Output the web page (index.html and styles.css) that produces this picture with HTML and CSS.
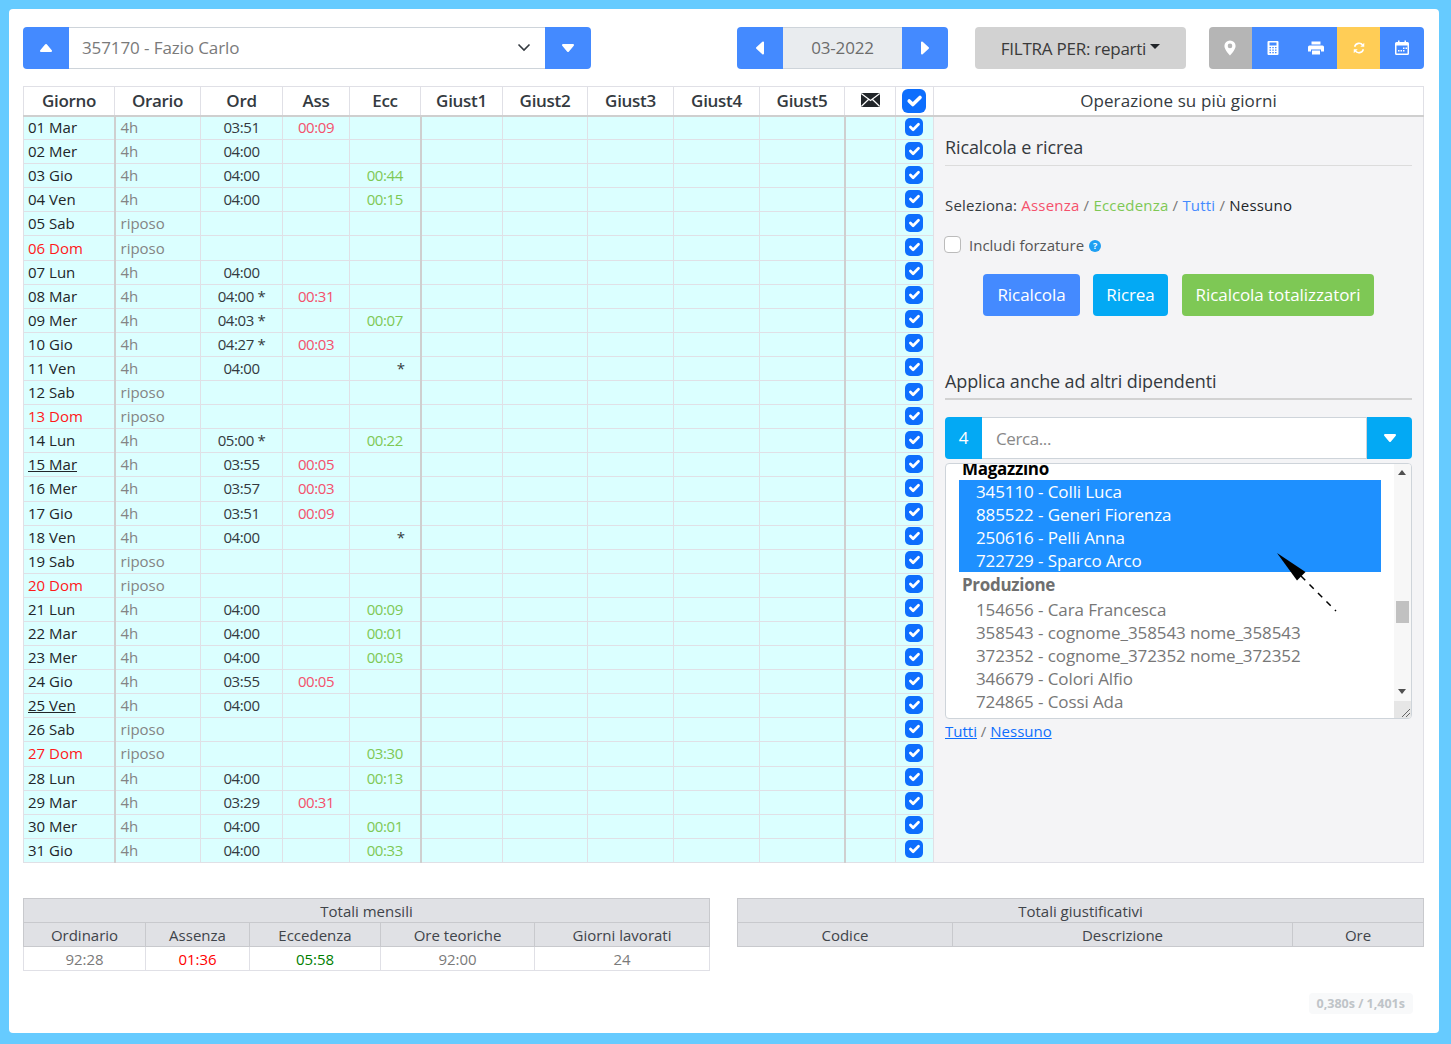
FILE: index.html
```html
<!DOCTYPE html>
<html lang="it">
<head>
    <meta charset="UTF-8">
    <title>Cartellino</title>
    <link rel="stylesheet" href="styles.css">
</head>
<body>
<div class="card">

    <!-- Barra superiore -->
    <div class="toolbar">
        <div class="group group-emp">
            <button class="btn btn-blue btn-arrow"><svg width="14" height="10" viewBox="0 0 14 10"><path d="M7 2L2 8h10z" class="tri"/></svg></button>
            <div class="select">357170 - Fazio Carlo
                <svg class="chevron" width="14" height="9" viewBox="0 0 14 9"><path d="M1.5 1.5L7 7l5.5-5.5" fill="none" stroke="#343a40" stroke-width="1.6"/></svg>
            </div>
            <button class="btn btn-blue btn-arrow"><svg width="14" height="10" viewBox="0 0 14 10"><path d="M2 2h10L7 8z" class="tri"/></svg></button>
        </div>

        <div class="group group-date">
            <button class="btn btn-blue btn-side"><svg width="10" height="14" viewBox="0 0 10 14"><path d="M8 1.5v11L2 7z" class="tri"/></svg></button>
            <div class="date">03-2022</div>
            <button class="btn btn-blue btn-side"><svg width="10" height="14" viewBox="0 0 10 14"><path d="M2 1.5v11L8 7z" class="tri"/></svg></button>
        </div>

        <button class="btn btn-filter">FILTRA PER: reparti<span class="caret"></span></button>

        <div class="group group-icons">
            <button class="btn btn-icon btn-gray"><svg width="14" height="16" viewBox="0 0 14 16"><path fill="#fff" fill-rule="evenodd" d="M7 .5A5.6 5.6 0 0 0 1.4 6c0 3.7 5.6 9.5 5.6 9.5s5.6-5.800 5.600-9.500A5.600 5.600 0 0 0 7 .5zM7 8.200A2.300 2.300 0 1 1 7 3.600a2.300 2.300 0 0 1 0 4.600z"/></svg></button>
            <button class="btn btn-icon btn-blue"><svg width="14" height="16" viewBox="0 0 14 16"><path fill="#fff" fill-rule="evenodd" d="M2.500 1h9a1 1 0 0 1 1 1v12a1 1 0 0 1-1 1h-9a1 1 0 0 1-1-1V2a1 1 0 0 1 1-1zM3.500 2.500v3h7v-3zM3.500 7v1.300h1.500V7zM6.300 7v1.300h1.500V7zM9 7v1.300h1.500V7zM3.500 9.500v1.300h1.500V9.500zM6.300 9.500v1.300h1.500V9.500zM9 9.500v1.300h1.500V9.500zM3.500 12v1.300h1.500V12zM6.300 12v1.300h1.500V12zM9 12v1.300h1.500V12z"/></svg></button>
            <button class="btn btn-icon btn-blue"><svg width="18" height="16" viewBox="0 0 18 16"><path fill="#fff" fill-rule="evenodd" d="M4.500 1.500h9v3h-9zM2.500 5.500h13a1.500 1.500 0 0 1 1.500 1.500v4.500h-3V9.500H4v2H1V7a1.500 1.500 0 0 1 1.500-1.500zM5 10.500h8v4H5z"/></svg></button>
            <button class="btn btn-icon btn-yellow"><svg width="14" height="14" viewBox="0 0 16 16"><path fill="none" stroke="#fff" stroke-width="1.800" d="M3 6.500A5.200 5.200 0 0 1 12.400 5M13 9.500A5.200 5.200 0 0 1 3.600 11"/><path fill="#fff" d="M14 2v4.500H9.500zM2 14V9.500h4.500z"/></svg></button>
            <button class="btn btn-icon btn-blue"><svg width="16" height="16" viewBox="0 0 16 16"><path fill="#fff" fill-rule="evenodd" d="M4 .5h1.500V2h5V.5H12V2h1.500A1.500 1.500 0 0 1 15 3.500v10a1.500 1.500 0 0 1-1.500 1.500h-11A1.500 1.500 0 0 1 1 13.500v-10A1.500 1.500 0 0 1 2.500 2H4zM2.500 5.500v8h11v-8zM9 7.500h1.500V9H9zM11.500 7.500H13V9h-1.500zM6.500 10H8v1.500H6.500zM4 10h1.500v1.500H4zM9 10h1.500v1.500H9z"/></svg></button>
        </div>
    </div>

    <!-- Tabella giorni -->
    <table class="days">
        <colgroup>
            <col class="c-giorno"><col class="c-orario"><col class="c-ord"><col class="c-ass"><col class="c-ecc">
            <col class="c-g1"><col class="c-g2"><col class="c-g3"><col class="c-g4"><col class="c-g5">
            <col class="c-mail"><col class="c-check"><col>
        </colgroup>
        <thead>
            <tr>
                <th>Giorno</th><th>Orario</th><th>Ord</th><th>Ass</th><th>Ecc</th>
                <th>Giust1</th><th>Giust2</th><th>Giust3</th><th>Giust4</th><th>Giust5</th>
                <th><svg class="mail" width="19" height="14" viewBox="0 0 19 14"><rect width="19" height="14" rx="1.500" fill="#212529"/><path d="M.5.800L9.500 7.500 18.500.800M.5 13.200L7.500 6.500M18.500 13.200L11.500 6.500" fill="none" stroke="#fff" stroke-width="1.200"/></svg></th>
                <th><input type="checkbox" class="check check-big" checked></th>
                <th class="side-title">Operazione su più giorni</th>
            </tr>
        </thead>
        <tbody>
            <tr><td>01 Mar</td><td class="hrs">4h</td><td>03:51</td><td class="ass">00:09</td><td></td><td></td><td></td><td></td><td></td><td></td><td></td><td><input type="checkbox" class="check" checked></td>
                <td rowspan="31" class="side">
                    <div class="panel">
                        <h5 class="panel-title">Ricalcola e ricrea</h5>
                        <p class="pick">Seleziona: <a class="ass">Assenza</a> <span class="sep">/</span> <a class="ecc">Eccedenza</a> <span class="sep">/</span> <a class="all">Tutti</a> <span class="sep">/</span> <a class="none">Nessuno</a></p>
                        <label class="force"><input type="checkbox" class="check-empty"> Includi forzature <span class="help">?</span></label>
                        <div class="actions">
                            <button class="btn btn-blue btn-act">Ricalcola</button>
                            <button class="btn btn-cyan btn-act">Ricrea</button>
                            <button class="btn btn-green btn-act">Ricalcola totalizzatori</button>
                        </div>
                        <h5 class="panel-title2">Applica anche ad altri dipendenti</h5>
                        <div class="group group-search">
                            <div class="count">4</div>
                            <div class="search">Cerca...</div>
                            <button class="btn btn-cyan btn-drop"><svg width="14" height="10" viewBox="0 0 14 10"><path d="M2 2h10L7 8z" class="tri"/></svg></button>
                        </div>
                        <div class="listbox">
                            <div class="list">
                                <div class="optgroup first">Magazzino</div>
                                <div class="opt sel">345110 - Colli Luca</div>
                                <div class="opt sel">885522 - Generi Fiorenza</div>
                                <div class="opt sel">250616 - Pelli Anna</div>
                                <div class="opt sel">722729 - Sparco Arco</div>
                                <div class="optgroup">Produzione</div>
                                <div class="opt">154656 - Cara Francesca</div>
                                <div class="opt">358543 - cognome_358543 nome_358543</div>
                                <div class="opt">372352 - cognome_372352 nome_372352</div>
                                <div class="opt">346679 - Colori Alfio</div>
                                <div class="opt">724865 - Cossi Ada</div>
                                <div class="opt">512207 - Dani Marco</div>
                            </div>
                            <div class="scrollbar">
                                <svg class="sb-up" width="8" height="5" viewBox="0 0 8 5"><path d="M4 0l4 5H0z" fill="#505050"/></svg>
                                <div class="sb-thumb"></div>
                                <svg class="sb-down" width="8" height="5" viewBox="0 0 8 5"><path d="M0 0h8L4 5z" fill="#505050"/></svg>
                                <div class="sb-grip"><svg width="12" height="12" viewBox="0 0 12 12"><path d="M3 11l8-8M7 11l4-4" stroke="#666" fill="none"/></svg></div>
                            </div>
                            <svg class="pointer" width="70" height="70" viewBox="0 0 70 70"><path d="M1 1L29.500 20 21 28.500z" fill="#000"/><path d="M25 24L60 59" stroke="#000" stroke-width="1.500" stroke-dasharray="6 6" fill="none"/></svg>
                        </div>
                        <p class="links"><a>Tutti</a> <span class="sep">/</span> <a>Nessuno</a></p>
                    </div>
                </td>
            </tr>
            <tr><td>02 Mer</td><td class="hrs">4h</td><td>04:00</td><td></td><td></td><td></td><td></td><td></td><td></td><td></td><td></td><td><input type="checkbox" class="check" checked></td></tr>
            <tr><td>03 Gio</td><td class="hrs">4h</td><td>04:00</td><td></td><td class="ecc">00:44</td><td></td><td></td><td></td><td></td><td></td><td></td><td><input type="checkbox" class="check" checked></td></tr>
            <tr><td>04 Ven</td><td class="hrs">4h</td><td>04:00</td><td></td><td class="ecc">00:15</td><td></td><td></td><td></td><td></td><td></td><td></td><td><input type="checkbox" class="check" checked></td></tr>
            <tr><td>05 Sab</td><td class="hrs">riposo</td><td></td><td></td><td></td><td></td><td></td><td></td><td></td><td></td><td></td><td><input type="checkbox" class="check" checked></td></tr>
            <tr><td class="sun">06 Dom</td><td class="hrs">riposo</td><td></td><td></td><td></td><td></td><td></td><td></td><td></td><td></td><td></td><td><input type="checkbox" class="check" checked></td></tr>
            <tr><td>07 Lun</td><td class="hrs">4h</td><td>04:00</td><td></td><td></td><td></td><td></td><td></td><td></td><td></td><td></td><td><input type="checkbox" class="check" checked></td></tr>
            <tr><td>08 Mar</td><td class="hrs">4h</td><td>04:00 *</td><td class="ass">00:31</td><td></td><td></td><td></td><td></td><td></td><td></td><td></td><td><input type="checkbox" class="check" checked></td></tr>
            <tr><td>09 Mer</td><td class="hrs">4h</td><td>04:03 *</td><td></td><td class="ecc">00:07</td><td></td><td></td><td></td><td></td><td></td><td></td><td><input type="checkbox" class="check" checked></td></tr>
            <tr><td>10 Gio</td><td class="hrs">4h</td><td>04:27 *</td><td class="ass">00:03</td><td></td><td></td><td></td><td></td><td></td><td></td><td></td><td><input type="checkbox" class="check" checked></td></tr>
            <tr><td>11 Ven</td><td class="hrs">4h</td><td>04:00</td><td></td><td class="star">*</td><td></td><td></td><td></td><td></td><td></td><td></td><td><input type="checkbox" class="check" checked></td></tr>
            <tr><td>12 Sab</td><td class="hrs">riposo</td><td></td><td></td><td></td><td></td><td></td><td></td><td></td><td></td><td></td><td><input type="checkbox" class="check" checked></td></tr>
            <tr><td class="sun">13 Dom</td><td class="hrs">riposo</td><td></td><td></td><td></td><td></td><td></td><td></td><td></td><td></td><td></td><td><input type="checkbox" class="check" checked></td></tr>
            <tr><td>14 Lun</td><td class="hrs">4h</td><td>05:00 *</td><td></td><td class="ecc">00:22</td><td></td><td></td><td></td><td></td><td></td><td></td><td><input type="checkbox" class="check" checked></td></tr>
            <tr><td class="under">15 Mar</td><td class="hrs">4h</td><td>03:55</td><td class="ass">00:05</td><td></td><td></td><td></td><td></td><td></td><td></td><td></td><td><input type="checkbox" class="check" checked></td></tr>
            <tr><td>16 Mer</td><td class="hrs">4h</td><td>03:57</td><td class="ass">00:03</td><td></td><td></td><td></td><td></td><td></td><td></td><td></td><td><input type="checkbox" class="check" checked></td></tr>
            <tr><td>17 Gio</td><td class="hrs">4h</td><td>03:51</td><td class="ass">00:09</td><td></td><td></td><td></td><td></td><td></td><td></td><td></td><td><input type="checkbox" class="check" checked></td></tr>
            <tr><td>18 Ven</td><td class="hrs">4h</td><td>04:00</td><td></td><td class="star">*</td><td></td><td></td><td></td><td></td><td></td><td></td><td><input type="checkbox" class="check" checked></td></tr>
            <tr><td>19 Sab</td><td class="hrs">riposo</td><td></td><td></td><td></td><td></td><td></td><td></td><td></td><td></td><td></td><td><input type="checkbox" class="check" checked></td></tr>
            <tr><td class="sun">20 Dom</td><td class="hrs">riposo</td><td></td><td></td><td></td><td></td><td></td><td></td><td></td><td></td><td></td><td><input type="checkbox" class="check" checked></td></tr>
            <tr><td>21 Lun</td><td class="hrs">4h</td><td>04:00</td><td></td><td class="ecc">00:09</td><td></td><td></td><td></td><td></td><td></td><td></td><td><input type="checkbox" class="check" checked></td></tr>
            <tr><td>22 Mar</td><td class="hrs">4h</td><td>04:00</td><td></td><td class="ecc">00:01</td><td></td><td></td><td></td><td></td><td></td><td></td><td><input type="checkbox" class="check" checked></td></tr>
            <tr><td>23 Mer</td><td class="hrs">4h</td><td>04:00</td><td></td><td class="ecc">00:03</td><td></td><td></td><td></td><td></td><td></td><td></td><td><input type="checkbox" class="check" checked></td></tr>
            <tr><td>24 Gio</td><td class="hrs">4h</td><td>03:55</td><td class="ass">00:05</td><td></td><td></td><td></td><td></td><td></td><td></td><td></td><td><input type="checkbox" class="check" checked></td></tr>
            <tr><td class="under">25 Ven</td><td class="hrs">4h</td><td>04:00</td><td></td><td></td><td></td><td></td><td></td><td></td><td></td><td></td><td><input type="checkbox" class="check" checked></td></tr>
            <tr><td>26 Sab</td><td class="hrs">riposo</td><td></td><td></td><td></td><td></td><td></td><td></td><td></td><td></td><td></td><td><input type="checkbox" class="check" checked></td></tr>
            <tr><td class="sun">27 Dom</td><td class="hrs">riposo</td><td></td><td></td><td class="ecc">03:30</td><td></td><td></td><td></td><td></td><td></td><td></td><td><input type="checkbox" class="check" checked></td></tr>
            <tr><td>28 Lun</td><td class="hrs">4h</td><td>04:00</td><td></td><td class="ecc">00:13</td><td></td><td></td><td></td><td></td><td></td><td></td><td><input type="checkbox" class="check" checked></td></tr>
            <tr><td>29 Mar</td><td class="hrs">4h</td><td>03:29</td><td class="ass">00:31</td><td></td><td></td><td></td><td></td><td></td><td></td><td></td><td><input type="checkbox" class="check" checked></td></tr>
            <tr><td>30 Mer</td><td class="hrs">4h</td><td>04:00</td><td></td><td class="ecc">00:01</td><td></td><td></td><td></td><td></td><td></td><td></td><td><input type="checkbox" class="check" checked></td></tr>
            <tr><td>31 Gio</td><td class="hrs">4h</td><td>04:00</td><td></td><td class="ecc">00:33</td><td></td><td></td><td></td><td></td><td></td><td></td><td><input type="checkbox" class="check" checked></td></tr>
        </tbody>
    </table>

    <!-- Totali -->
    <div class="totals">
        <table class="tot">
            <colgroup><col class="t1"><col class="t2"><col class="t3"><col class="t4"><col></colgroup>
            <tr><th colspan="5">Totali mensili</th></tr>
            <tr><th>Ordinario</th><th>Assenza</th><th>Eccedenza</th><th>Ore teoriche</th><th>Giorni lavorati</th></tr>
            <tr><td>92:28</td><td class="red">01:36</td><td class="green">05:58</td><td>92:00</td><td>24</td></tr>
        </table>
        <table class="tot">
            <colgroup><col class="t5"><col class="t6"><col></colgroup>
            <tr><th colspan="3">Totali giustificativi</th></tr>
            <tr><th>Codice</th><th>Descrizione</th><th>Ore</th></tr>
        </table>
    </div>

    <div class="timer-row"><span class="timer">0,380s / 1,401s</span></div>
</div>
</body>
</html>
```

FILE: styles.css
```css
/* Generale */
* {
    box-sizing: border-box;
    margin: 0;
    padding: 0;
}

body {
    background-color: #66cbff;
    font-family: "Open Sans", "Noto Sans", sans-serif;
    font-size: 15px;
    color: #212529;
    padding: 9px 12px 11px 9px;
}

.card {
    background-color: #fff;
    border-radius: 4px;
    height: 1024px;
    padding: 18px 15px 0 14px;
}

.btn {
    border: 0;
    font-family: inherit;
    color: #fff;
    display: flex;
    align-items: center;
    justify-content: center;
}

.tri {
    fill: #fff;
    stroke: #fff;
    stroke-width: 2;
    stroke-linejoin: round;
}

.btn-blue { background-color: #448aff; }
.btn-cyan { background-color: #03a9f4; }
.btn-green { background-color: #7ec855; }
.btn-gray { background-color: #b5b5b5; }
.btn-yellow { background-color: #ffcd56; }

/* Barra superiore */
.toolbar {
    display: flex;
    height: 42px;
}

.group {
    display: flex;
    height: 42px;
    border-radius: 4px;
    overflow: hidden;
}

.group-emp { width: 568px; }

.btn-arrow { width: 46px; flex: none; }

.select {
    flex: 1;
    position: relative;
    border-top: 1px solid #ced4da;
    border-bottom: 1px solid #ced4da;
    padding-left: 13px;
    line-height: 40px;
    font-size: 17px;
    letter-spacing: -0.1px;
    color: #7a7a7a;
}

.chevron {
    position: absolute;
    right: 14px;
    top: 15px;
}

.group-date {
    width: 211px;
    margin-left: 146px;
}

.btn-side { width: 46px; flex: none; }

.date {
    flex: 1;
    background-color: #e9ecef;
    border-top: 1px solid #ced4da;
    border-bottom: 1px solid #ced4da;
    text-align: center;
    line-height: 40px;
    font-size: 17px;
    letter-spacing: -0.2px;
    color: #6c6c6c;
}

.btn-filter {
    width: 211px;
    height: 42px;
    margin-left: 27px;
    background-color: #d2d2d2;
    border-radius: 4px;
    color: #3a3a3a;
    font-size: 17px;
    letter-spacing: -0.25px;
}

.caret {
    margin-left: 4px;
    margin-bottom: 3px;
    border-top: 5px solid #212529;
    border-left: 5px solid transparent;
    border-right: 5px solid transparent;
}

.group-icons {
    width: 215px;
    margin-left: 23px;
}

.btn-icon { flex: 0 0 42.75px; }
.btn-icon:last-child { flex: 1; }

/* Tabella giorni */
.days {
    width: 1401px;
    height: 777px;
    margin-top: 17px;
    border-collapse: collapse;
    table-layout: fixed;
    border: 1px solid #e0e0e6;
}

.c-giorno { width: 91px; }
.c-orario { width: 86px; }
.c-ord { width: 82px; }
.c-ass { width: 67px; }
.c-ecc { width: 71px; }
.c-g1 { width: 82px; }
.c-g2 { width: 85px; }
.c-g3 { width: 86px; }
.c-g4 { width: 86px; }
.c-g5 { width: 85px; }
.c-mail { width: 51px; }
.c-check { width: 38px; }

.days th {
    height: 29px;
    font-size: 17px;
    font-weight: 600;
    letter-spacing: -0.3px;
    color: #343a40;
    border: 1px solid #e0e0e6;
    border-bottom: 2px solid #cfcfcf;
    text-align: center;
    padding: 0;
}

.days th.side-title {
    font-weight: 500;
    letter-spacing: 0.1px;
}

.mail {
    display: block;
    margin: 0 auto 2px;
}

.days td {
    height: 24.1px;
    background-color: #dbffff;
    border: 1px solid #e0e0e6;
    text-align: center;
    padding: 0 0 1px;
    color: #343a40;
    line-height: 18px;
    letter-spacing: -0.4px;
}

.days td:first-child {
    text-align: left;
    padding-left: 4px;
    color: #212529;
    letter-spacing: 0;
    border-right: 2px solid #cfcfcf;
}

.days td:nth-child(5),
.days td:nth-child(10) {
    border-right: 2px solid #cfcfcf;
}

.days td.hrs {
    text-align: left;
    padding-left: 5px;
    color: #848484;
    letter-spacing: 0;
}

.days td.sun { color: #ff1a1a; }
.days td.under { text-decoration: underline; }

.days td.ass, .pick .ass { color: #f4516c; }
.days td.ecc, .pick .ecc { color: #7ec855; }

.days td.star {
    text-align: right;
    padding-right: 15px;
}

.check {
    appearance: none;
    display: block;
    margin: 0 0 1px 9px;
    width: 18px;
    height: 18px;
    border-radius: 5px;
    background: #0d6efd url("data:image/svg+xml,%3Csvg xmlns='http://www.w3.org/2000/svg' viewBox='0 0 20 20'%3E%3Cpath fill='none' stroke='%23fff' stroke-width='3' stroke-linecap='round' stroke-linejoin='round' d='M6 10l3 3 6-6'/%3E%3C/svg%3E") center / 100% no-repeat;
}

.check-big {
    width: 24px;
    height: 24px;
    border-radius: 6px;
    margin: 0 0 0 6px;
}

/* Pannello laterale */
.days td.side {
    background-color: #f4f4f6;
    vertical-align: top;
    text-align: left;
    letter-spacing: 0;
    padding: 0;
}

.panel {
    padding: 17px 11px 0 11px;
}

.panel-title {
    font-size: 18px;
    font-weight: 500;
    letter-spacing: -0.12px;
    line-height: 26px;
    padding-bottom: 5px;
    border-bottom: 1px solid #dcdcdc;
}

.pick {
    margin-top: 29px;
    line-height: 20px;
    letter-spacing: 0.2px;
    color: #343a40;
}

.sep { color: #777; }
.pick .all { color: #448aff; }
.pick .none { color: #212529; }

.force {
    display: flex;
    align-items: center;
    margin-top: 20px;
    margin-left: -1px;
    line-height: 20px;
    color: #555;
}

.check-empty {
    appearance: none;
    width: 17px;
    height: 17px;
    margin-right: 8px;
    background-color: #fff;
    border: 1px solid #bbb;
    border-radius: 4px;
}

.help {
    width: 12px;
    height: 12px;
    margin-left: 5px;
    margin-top: 2px;
    border-radius: 50%;
    background-color: #1e9ff2;
    color: #fff;
    font-size: 9px;
    font-weight: 700;
    line-height: 12px;
    text-align: center;
}

.actions {
    display: flex;
    margin-top: 19px;
    margin-left: 38px;
}

.btn-act {
    height: 42px;
    border-radius: 4px;
    font-size: 17px;
    letter-spacing: -0.07px;
    margin-right: 13px;
    width: 97px;
}

.btn-act:nth-child(2) { width: 75px; margin-right: 14px; }
.btn-act:nth-child(3) { width: 192px; }

.panel-title2 {
    margin-top: 52px;
    font-size: 18px;
    font-weight: 500;
    letter-spacing: -0.12px;
    line-height: 26px;
    padding-bottom: 4px;
    border-bottom: 2px solid #d2d2d2;
}

.group-search {
    margin-top: 17px;
}

.count {
    width: 37px;
    flex: none;
    background-color: #03a9f4;
    color: #fff;
    font-size: 17px;
    line-height: 42px;
    text-align: center;
}

.search {
    flex: 1;
    background-color: #fff;
    border-top: 1px solid #ced4da;
    border-bottom: 1px solid #ced4da;
    border-right: 1px solid #ced4da;
    padding-left: 14px;
    line-height: 42px;
    font-size: 17px;
    letter-spacing: -0.4px;
    color: #888;
}

.btn-drop { width: 45px; flex: none; }

/* Lista dipendenti */
.listbox {
    position: relative;
    height: 256px;
    margin-top: 4px;
    background-color: #fff;
    border: 1px solid #ced4da;
    border-radius: 4px;
    overflow: hidden;
    padding-left: 13px;
    padding-right: 30px;
    font-size: 17px;
    letter-spacing: -0.1px;
    line-height: 23px;
}

.list { margin-top: -7px; }

.optgroup {
    font-weight: 700;
    color: #6f6f6f;
    padding-left: 3px;
    padding-top: 1px;
    letter-spacing: -0.3px;
}

.optgroup.first {
    color: #000;
    padding-top: 0;
}

.opt {
    padding-left: 17px;
    color: #777;
}

.opt.sel {
    background-color: #1e90ff;
    color: #fff;
}

.optgroup + .opt:not(.sel) { margin-top: 2px; }

.scrollbar {
    position: absolute;
    top: 0;
    right: 0;
    bottom: 0;
    width: 17px;
    background-color: #f7f7f7;
}

.sb-up {
    position: absolute;
    top: 6px;
    left: 4px;
}

.sb-down {
    position: absolute;
    top: 225px;
    left: 4px;
}

.sb-thumb {
    position: absolute;
    top: 137px;
    left: 2px;
    width: 13px;
    height: 22px;
    background-color: #c1c1c1;
}

.sb-grip {
    position: absolute;
    right: 0;
    bottom: 0;
    width: 17px;
    height: 17px;
    background-color: #e6e6e6;
    display: flex;
    align-items: flex-end;
    justify-content: flex-end;
}

.pointer {
    position: absolute;
    left: 330px;
    top: 88px;
}

.links {
    margin-top: 2px;
    line-height: 20px;
}

.links a {
    color: #0d6efd;
    text-decoration: underline;
}

/* Totali */
.totals {
    display: flex;
    gap: 27px;
    margin-top: 35px;
    align-items: flex-start;
}

.tot {
    width: 687px;
    border-collapse: collapse;
    table-layout: fixed;
}

.t1 { width: 122px; }
.t2 { width: 104px; }
.t3 { width: 131px; }
.t4 { width: 154px; }
.t5 { width: 215px; }
.t6 { width: 340px; }

.tot th {
    height: 24px;
    background-color: #e0e1e5;
    border: 1px solid #c8c9cd;
    font-weight: 500;
    color: #3f444a;
    padding: 0;
}

.tot td {
    height: 24px;
    border: 1px solid #e0e0e6;
    text-align: center;
    color: #7a7a7a;
    padding: 0;
}

.tot td.red { color: #ff0000; }
.tot td.green { color: #008000; }

.timer-row {
    display: flex;
    justify-content: flex-end;
    padding-right: 11px;
    margin-top: 22px;
}

.timer {
    background-color: #f8f9fa;
    border-radius: 4px;
    padding: 0 8px;
    color: #bfc4c8;
    font-size: 12.5px;
    font-weight: 700;
    line-height: 21px;
}
```
